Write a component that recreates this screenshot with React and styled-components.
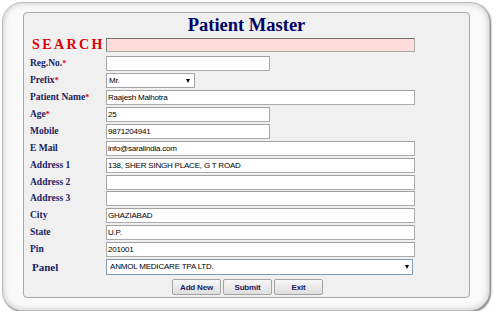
import React from "react";
import styled, { createGlobalStyle } from "styled-components";

const Global = createGlobalStyle`
  html, body { margin: 0; padding: 0; background: #ffffff; }
  * { box-sizing: border-box; }
`;

const Outer = styled.div`
  margin: 2px 0 0 2px;
  width: 488px;
  height: 309px;
  border-radius: 20px;
  background: #f9f9f9;
  border: 1px solid #bdbdbd;
  box-shadow: inset 0 0 6px rgba(0, 0, 0, 0.22), 1px 1px 2px rgba(0, 0, 0, 0.55);
  padding: 9px 19px 12px 20px;
  display: flex;
`;

const Panel = styled.div`
  flex: 1;
  background: #f0f0f0;
  border: 1px solid #a9a9a9;
  border-radius: 4px;
  padding: 0 0 2px 6px;
  display: flex;
  flex-direction: column;
`;

const Title = styled.h1`
  margin: 0;
  height: 26px;
  padding-top: 1px;
  text-align: center;
  font-family: "Liberation Serif", "Times New Roman", serif;
  font-weight: bold;
  font-size: 18.5px;
  line-height: 22px;
  color: #000066;
  padding-right: 6px;
`;

const Grid = styled.div`
  display: grid;
  grid-template-columns: 76px auto;
  align-items: center;
  justify-items: start;
  row-gap: ${(p) => p.$gap || 0}px;
  margin-top: ${(p) => p.$top || 0}px;
`;

const SearchLabel = styled.span`
  padding-left: 2px;
  font-family: "Liberation Serif", "Times New Roman", serif;
  font-weight: bold;
  font-size: 14px;
  letter-spacing: 2.4px;
  color: #e00000;
  line-height: 14px;
`;

const Label = styled.label`
  display: block;
  padding-left: ${(p) => (p.$big ? 2 : 0)}px;
  font-family: "Liberation Serif", "Times New Roman", serif;
  font-weight: bold;
  font-size: ${(p) => (p.$big ? 11 : 9.5)}px;
  color: #1c1c5e;
  line-height: 15px;
  height: 15px;
  white-space: nowrap;
`;

const Star = styled.span`
  color: #e00000;
  font-size: 8px;
`;

const TextInput = styled.input`
  display: block;
  width: ${(p) => p.$w}px;
  height: ${(p) => p.$h || 15}px;
  margin: 0;
  padding: 0 0 0 1px;
  border: 1px solid #ababab;
  border-top-color: ${(p) => (p.$search ? "#6f6f6f" : "#a0a0a0")};
  border-left-color: ${(p) => (p.$search ? "#7a7a7a" : "#a8a8a8")};
  background: ${(p) => (p.$search ? "#ffdcdc" : "#ffffff")};
  font-family: "Liberation Sans", Arial, sans-serif;
  font-size: 8px;
  letter-spacing: -0.2px;
  color: #000;
  outline: none;
`;

const SelectWrap = styled.div`
  position: relative;
  width: ${(p) => p.$w}px;
  height: ${(p) => p.$h || 15}px;
`;

const Select = styled.select`
  display: block;
  appearance: none;
  -webkit-appearance: none;
  width: 100%;
  height: 100%;
  margin: 0;
  padding: 0 0 0 ${(p) => (p.$blue ? 3 : 2)}px;
  line-height: 12px;
  border: 1px solid ${(p) => (p.$blue ? "#7f9db9" : "#a5a5a5")};
  border-radius: 0;
  background: #ffffff;
  font-family: "Liberation Sans", Arial, sans-serif;
  font-size: 8px;
  letter-spacing: -0.2px;
  color: #000;
  outline: none;
`;

const Arrow = styled.span`
  position: absolute;
  right: ${(p) => p.$r}px;
  top: 50%;
  margin-top: -2px;
  width: 0;
  height: 0;
  border-left: 2.5px solid transparent;
  border-right: 2.5px solid transparent;
  border-top: 4px solid #000;
  pointer-events: none;
`;

const Buttons = styled.div`
  display: flex;
  justify-content: center;
  gap: 2px;
  margin-top: 4px;
  padding-right: 4px;
`;

const Button = styled.button`
  width: 49px;
  height: 16px;
  margin: 0;
  padding: 0;
  border: 1px solid #a3a3a3;
  border-radius: 2px;
  background: linear-gradient(#f7f7f7, #dedede);
  font-family: "Liberation Sans", Arial, sans-serif;
  font-weight: bold;
  font-size: 8px;
  letter-spacing: -0.2px;
  color: #1c1c5e;
  cursor: pointer;
`;

const rows = [
  { label: "Reg.No.", req: true, w: 164, value: "" },
  { label: "Prefix", req: true, select: true, w: 89, value: "Mr.", ar: 5 },
  { label: "Patient Name", req: true, w: 309, value: "Raajesh Malhotra" },
  { label: "Age", req: true, w: 164, value: "25" },
  { label: "Mobile", w: 164, value: "9871204941" },
  { label: "E Mail", w: 309, value: "info@saralindia.com" },
  { label: "Address 1", w: 309, value: "138, SHER SINGH PLACE, G T ROAD" },
  { label: "Address 2", w: 309, value: "" },
  { label: "Address 3", w: 309, value: "" },
  { label: "City", w: 309, value: "GHAZIABAD" },
  { label: "State", w: 309, value: "U.P." },
  { label: "Pin", w: 309, value: "201001" },
];

export default function App() {
  return (
    <>
      <Global />
      <Outer>
        <Panel>
          <Title>Patient Master</Title>
          <Grid>
            <SearchLabel>SEARCH</SearchLabel>
            <TextInput $search $w={309} $h={14} defaultValue="" />
          </Grid>
          <Grid $top={4} $gap={1.9}>
            {rows.map((r) => (
              <React.Fragment key={r.label}>
                <Label>
                  {r.label}
                  {r.req && <Star>*</Star>}
                </Label>
                {r.select ? (
                  <SelectWrap $w={r.w}>
                    <Select defaultValue={r.value}>
                      <option>{r.value}</option>
                    </Select>
                    <Arrow $r={r.ar} />
                  </SelectWrap>
                ) : (
                  <TextInput $w={r.w} defaultValue={r.value} />
                )}
              </React.Fragment>
            ))}
            <Label $big>Panel</Label>
            <SelectWrap $w={307} $h={16}>
              <Select $blue defaultValue="ANMOL MEDICARE TPA LTD.">
                <option>ANMOL MEDICARE TPA LTD.</option>
              </Select>
              <Arrow $r={4} />
            </SelectWrap>
          </Grid>
          <Buttons>
            <Button>Add New</Button>
            <Button>Submit</Button>
            <Button>Exit</Button>
          </Buttons>
        </Panel>
      </Outer>
    </>
  );
}
